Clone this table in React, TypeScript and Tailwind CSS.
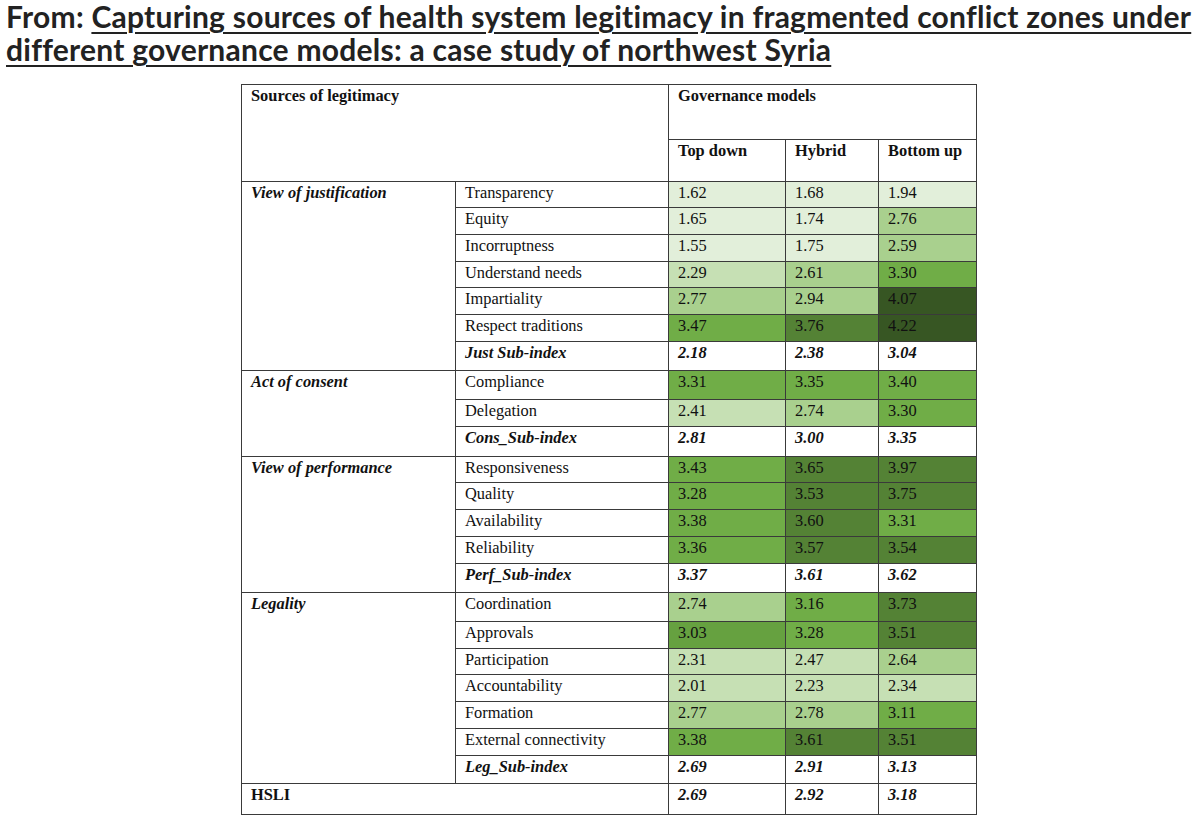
import React from "react";

type Row = {
  group?: { label: string; span: number };
  name: string;
  sub?: boolean;
  vals: string[];
  bg: string[];
  h: string;
};

const L1 = "bg-[#e2efda]";
const L2 = "bg-[#c6e0b4]";
const L3 = "bg-[#a9d08e]";
const L4 = "bg-[#70ad47]";
const L5 = "bg-[#548235]";
const L6 = "bg-[#375623]";
const W = "bg-white";

const rows: Row[] = [
  { group: { label: "View of justification", span: 7 }, name: "Transparency", vals: ["1.62", "1.68", "1.94"], bg: [L1, L1, L1], h: "h-[26px]" },
  { name: "Equity", vals: ["1.65", "1.74", "2.76"], bg: [L1, L1, L3], h: "h-[27px]" },
  { name: "Incorruptness", vals: ["1.55", "1.75", "2.59"], bg: [L1, L1, L3], h: "h-[27px]" },
  { name: "Understand needs", vals: ["2.29", "2.61", "3.30"], bg: [L2, L3, L4], h: "h-[26px]" },
  { name: "Impartiality", vals: ["2.77", "2.94", "4.07"], bg: [L3, L3, L6], h: "h-[27px]" },
  { name: "Respect traditions", vals: ["3.47", "3.76", "4.22"], bg: [L4, L5, L6], h: "h-[27px]" },
  { name: "Just Sub-index", sub: true, vals: ["2.18", "2.38", "3.04"], bg: [W, W, W], h: "h-[29px]" },
  { group: { label: "Act of consent", span: 3 }, name: "Compliance", vals: ["3.31", "3.35", "3.40"], bg: [L4, L4, L4], h: "h-[29px]" },
  { name: "Delegation", vals: ["2.41", "2.74", "3.30"], bg: [L2, L3, L4], h: "h-[27px]" },
  { name: "Cons_Sub-index", sub: true, vals: ["2.81", "3.00", "3.35"], bg: [W, W, W], h: "h-[30px]" },
  { group: { label: "View of performance", span: 5 }, name: "Responsiveness", vals: ["3.43", "3.65", "3.97"], bg: [L4, L5, L5], h: "h-[26px]" },
  { name: "Quality", vals: ["3.28", "3.53", "3.75"], bg: [L4, L5, L5], h: "h-[27px]" },
  { name: "Availability", vals: ["3.38", "3.60", "3.31"], bg: [L4, L5, L4], h: "h-[27px]" },
  { name: "Reliability", vals: ["3.36", "3.57", "3.54"], bg: [L4, L5, L5], h: "h-[27px]" },
  { name: "Perf_Sub-index", sub: true, vals: ["3.37", "3.61", "3.62"], bg: [W, W, W], h: "h-[29px]" },
  { group: { label: "Legality", span: 7 }, name: "Coordination", vals: ["2.74", "3.16", "3.73"], bg: [L3, L4, L5], h: "h-[29px]" },
  { name: "Approvals", vals: ["3.03", "3.28", "3.51"], bg: ["bg-[#66a140]", L4, L5], h: "h-[27px]" },
  { name: "Participation", vals: ["2.31", "2.47", "2.64"], bg: [L2, L2, L3], h: "h-[26px]" },
  { name: "Accountability", vals: ["2.01", "2.23", "2.34"], bg: [L2, L2, L2], h: "h-[27px]" },
  { name: "Formation", vals: ["2.77", "2.78", "3.11"], bg: [L3, L3, L4], h: "h-[27px]" },
  { name: "External connectivity", vals: ["3.38", "3.61", "3.51"], bg: [L4, L5, L5], h: "h-[27px]" },
  { name: "Leg_Sub-index", sub: true, vals: ["2.69", "2.91", "3.13"], bg: [W, W, W], h: "h-[28px]" },
];

const cell = "border border-[#3a3a3a] align-top px-[9px] pt-[2px] text-left";

export default function App() {
  return (
    <div className="w-[1200px] h-[824px] bg-white overflow-hidden">
      <h1 className="px-[6px] pt-0 text-[30px] leading-[33px] font-bold text-[#222] tracking-[0.25px] font-['Lato','Noto_Sans',sans-serif]">
        From:{" "}
        <span className="underline decoration-2 underline-offset-[4px]">
          Capturing sources of health system legitimacy in fragmented conflict zones under different governance
          models: a case study of northwest Syria
        </span>
      </h1>
      <div className="flex pt-[18px] pl-[241px]">
        <table className="border-collapse border border-[#3a3a3a] text-[16.4px] leading-[18px] text-[#111] font-['Liberation_Serif','Times_New_Roman',serif]">
          <colgroup>
            <col className="w-[214px]" />
            <col className="w-[213px]" />
            <col className="w-[117px]" />
            <col className="w-[93px]" />
            <col className="w-[98px]" />
          </colgroup>
          <tbody>
            <tr className="h-[55px]">
              <td colSpan={2} rowSpan={2} className={`${cell} font-bold`}>
                Sources of legitimacy
              </td>
              <td colSpan={3} className={`${cell} font-bold`}>
                Governance models
              </td>
            </tr>
            <tr className="h-[42px]">
              <td className={`${cell} font-bold`}>Top down</td>
              <td className={`${cell} font-bold`}>Hybrid</td>
              <td className={`${cell} font-bold`}>Bottom up</td>
            </tr>
            {rows.map((r) => (
              <tr key={r.name} className={r.h}>
                {r.group && (
                  <td rowSpan={r.group.span} className={`${cell} font-bold italic`}>
                    {r.group.label}
                  </td>
                )}
                <td className={`${cell} ${r.sub ? "font-bold italic" : ""}`}>{r.name}</td>
                {r.vals.map((v, i) => (
                  <td key={i} className={`${cell} ${r.bg[i]} ${r.sub ? "font-bold italic" : ""}`}>
                    {v}
                  </td>
                ))}
              </tr>
            ))}
            <tr className="h-[31px]">
              <td colSpan={2} className={`${cell} font-bold`}>
                HSLI
              </td>
              <td className={`${cell} font-bold italic`}>2.69</td>
              <td className={`${cell} font-bold italic`}>2.92</td>
              <td className={`${cell} font-bold italic`}>3.18</td>
            </tr>
          </tbody>
        </table>
      </div>
    </div>
  );
}
